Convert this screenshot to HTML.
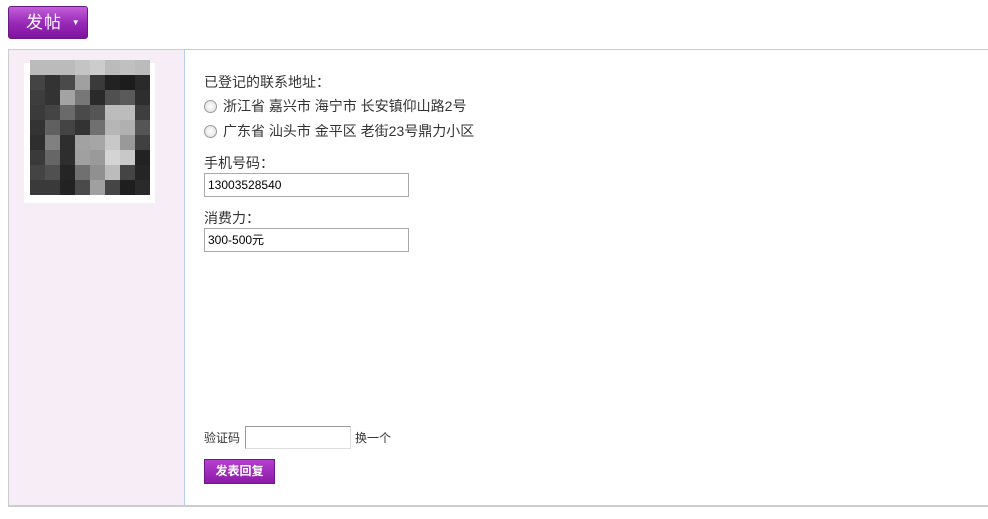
<!DOCTYPE html>
<html><head><meta charset="utf-8"><style>
*{margin:0;padding:0;box-sizing:border-box}
body{width:988px;height:519px;background:#fff;position:relative;font-family:"Liberation Sans","Noto Sans CJK SC",sans-serif;font-size:14px;color:#333;overflow:hidden}
.a{position:absolute}
.btn{left:8px;top:6px;width:80px;height:33px;border:1px solid #6a1a86;border-radius:3px;background:linear-gradient(#c25fd8,#9a2ab8 50%,#7f12a0);color:#fff;font-size:17px;line-height:31px;padding-left:17px;letter-spacing:1px}
.box{left:8px;top:49px;width:980px;height:458px;border-top:1px solid #ccc;border-bottom:2px solid #ccc}
.side{left:8px;top:49px;width:177px;height:458px;background:#f7edf7;border-left:1px solid #ccc;border-right:1px solid #b8cde6;border-bottom:2px solid #ccc;border-top:1px solid #ccc}
.av{left:24px;top:63px;width:131px;height:140px;background:#fff}
.grid{left:30px;top:60px;display:grid;grid-template-columns:repeat(8,15px);grid-auto-rows:15px}
.r{width:13px;height:13px;border-radius:50%;border:1px solid #999;background:radial-gradient(#fff,#ddd);display:inline-block;vertical-align:-2px;margin-right:6px}
.in{border:1px solid #a9a9a9;background:#fff;font-size:12px;padding-left:3px;color:#000}
.sb{left:204px;top:459px;width:71px;height:25px;background:linear-gradient(#b53fd0,#8c1aa8);border:1px solid #6a1a86;color:#fff;font-weight:bold;font-size:12px;text-align:center;line-height:23px}
</style></head><body>
<div class="a btn">发帖 <span style="font-size:8px;vertical-align:3px;margin-left:4px">▼</span></div>
<div class="a box"></div>
<div class="a side"></div>
<div class="a av"></div>
<div class="a grid" id="g"></div>
<div class="a" style="left:204px;top:72px">已登记的联系地址：</div>
<div class="a" style="left:204px;top:96px"><span class="r"></span>浙江省 嘉兴市 海宁市 长安镇仰山路2号</div>
<div class="a" style="left:204px;top:121px"><span class="r"></span>广东省 汕头市 金平区 老街23号鼎力小区</div>
<div class="a" style="left:204px;top:153px">手机号码：</div>
<div class="a in" style="left:204px;top:173px;width:205px;height:24px;line-height:22px">13003528540</div>
<div class="a" style="left:204px;top:208px">消费力：</div>
<div class="a in" style="left:204px;top:228px;width:205px;height:24px;line-height:22px">300-500元</div>
<div class="a" style="left:204px;top:429px;font-size:12px">验证码</div>
<div class="a in" style="left:245px;top:426px;width:106px;height:23px;border-color:#999 #ddd #ddd #999"></div>
<div class="a" style="left:355px;top:429px;font-size:12px">换一个</div>
<div class="a sb">发表回复</div>
<script>
var c=[["bbb","bbb","bbb","c4c4c4","ccc","bbb","c0c0c0","bbb"],
["444","333","4a4a4a","a0a0a0","3a3a3a","222","1c1c1c","2a2a2a"],
["3d3d3d","333","a3a3a3","777","2a2a2a","505050","5a5a5a","2e2e2e"],
["3a3a3a","444","6a6a6a","4a4a4a","555","bcbcbc","bcbcbc","3e3e3e"],
["333","606060","444","333","707070","b6b6b6","b0b0b0","555"],
["2e2e2e","808080","2e2e2e","a2a2a2","a6a6a6","c8c8c8","999","404040"],
["3a3a3a","666","2e2e2e","a0a0a0","9a9a9a","d4d4d4","c8c8c8","222"],
["444","505050","252525","707070","909090","bcbcbc","444","252525"],
["3a3a3a","3a3a3a","222","4a4a4a","a0a0a0","454545","1e1e1e","2a2a2a"]];
var h="";c.forEach(function(r){r.forEach(function(x){h+='<div style="background:#'+x+'"></div>'})});
document.getElementById("g").innerHTML=h;
</script>
</body></html>
